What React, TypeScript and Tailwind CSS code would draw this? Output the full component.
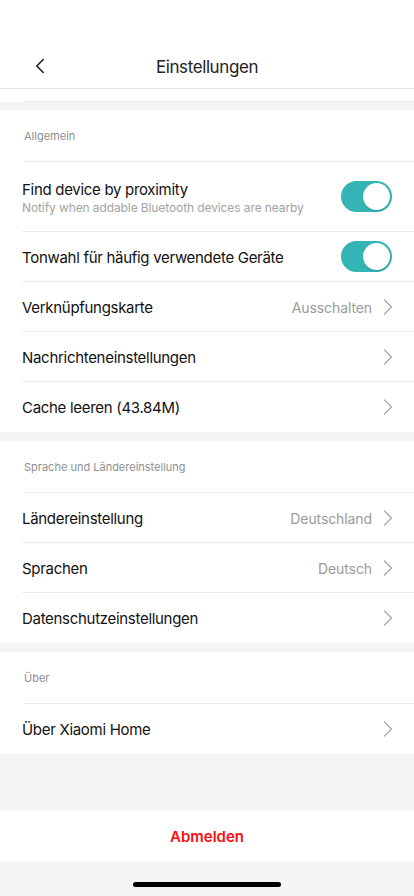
import { ChevronLeft, ChevronRight } from 'lucide-react'

type Row = {
  title: string
  subtitle?: string
  value?: string
  toggle?: boolean
}

const sections: { header: string; rows: Row[] }[] = [
  {
    header: 'Allgemein',
    rows: [
      { title: 'Find device by proximity', subtitle: 'Notify when addable Bluetooth devices are nearby', toggle: true },
      { title: 'Tonwahl für häufig verwendete Geräte', toggle: true },
      { title: 'Verknüpfungskarte', value: 'Ausschalten' },
      { title: 'Nachrichteneinstellungen' },
      { title: 'Cache leeren (43.84M)' },
    ],
  },
  {
    header: 'Sprache und Ländereinstellung',
    rows: [
      { title: 'Ländereinstellung', value: 'Deutschland' },
      { title: 'Sprachen', value: 'Deutsch' },
      { title: 'Datenschutzeinstellungen' },
    ],
  },
  {
    header: 'Über',
    rows: [{ title: 'Über Xiaomi Home' }],
  },
]

function Toggle() {
  return (
    <div className="w-[51px] h-[31px] rounded-full bg-[#32b5b4] p-[2px] flex justify-end">
      <div className="w-[27px] h-[27px] rounded-full bg-white shadow-[0_1px_2px_rgba(0,0,0,0.15)]" />
    </div>
  )
}

function SettingRow({ row, last }: { row: Row; last: boolean }) {
  return (
    <div className={`ml-[22px] pr-[22px] flex items-center ${row.subtitle ? 'h-[70px]' : 'h-[50px]'} ${last ? '' : 'border-b border-[#ececec]'}`}>
      <div className="flex-1 min-w-0 pt-[2px]">
        <div className="text-[15px] text-[#111] leading-[20px] tracking-[-0.3px]">{row.title}</div>
        {row.subtitle && (
          <div className="text-[12px] text-[#a3a3a3] leading-[16px] tracking-[-0.1px]">{row.subtitle}</div>
        )}
      </div>
      {row.toggle ? (
        <Toggle />
      ) : (
        <div className="flex items-center gap-[2px] text-[#9a9a9a]">
          {row.value && <span className="text-[14px] tracking-[-0.1px] pt-[2px]">{row.value}</span>}
          <ChevronRight size={28} strokeWidth={1.1} className="text-[#a8a8a8] mr-[-10px]" />
        </div>
      )}
    </div>
  )
}

export default function App() {
  return (
    <div
      className="w-[414px] h-[896px] bg-[#f5f5f5] flex flex-col overflow-hidden"
      style={{ fontFamily: 'Inter, "Noto Sans", sans-serif' }}
    >
      <div className="bg-white h-[89px] pt-[44px] border-b border-[#e6e6e6] relative flex items-center justify-center">
        <ChevronLeft size={26} strokeWidth={1.5} className="absolute left-[27px] top-[53px] text-[#222]" />
        <span className="text-[17px] text-[#222] tracking-[-0.4px] mt-[3px]">Einstellungen</span>
      </div>
      <div className="bg-white h-[13px]">
        <div className="ml-[24px] h-[13px] border-b border-[#e8e8e8]" />
      </div>

      {sections.map((s, idx) => (
        <div key={s.header} className={`bg-white ${idx === 0 ? 'mt-[8px]' : 'mt-[9px]'}`}>
          <div className="ml-[24px] h-[52px] pt-[2px] flex items-center border-b border-[#ececec] text-[11px] text-[#8f8f8f]">
            {s.header}
          </div>
          {s.rows.map((r, i) => (
            <SettingRow key={r.title} row={r} last={i === s.rows.length - 1} />
          ))}
        </div>
      ))}

      <div className="flex-1" />
      <div className="bg-white h-[50px] flex items-center justify-center text-[15px] font-semibold text-[#ff0d0d]">
        <span className="mt-[2px]">Abmelden</span>
      </div>
      <div className="h-[35px] flex justify-center pt-[21px]">
        <div className="w-[148px] h-[5px] rounded-full bg-black" />
      </div>
    </div>
  )
}
